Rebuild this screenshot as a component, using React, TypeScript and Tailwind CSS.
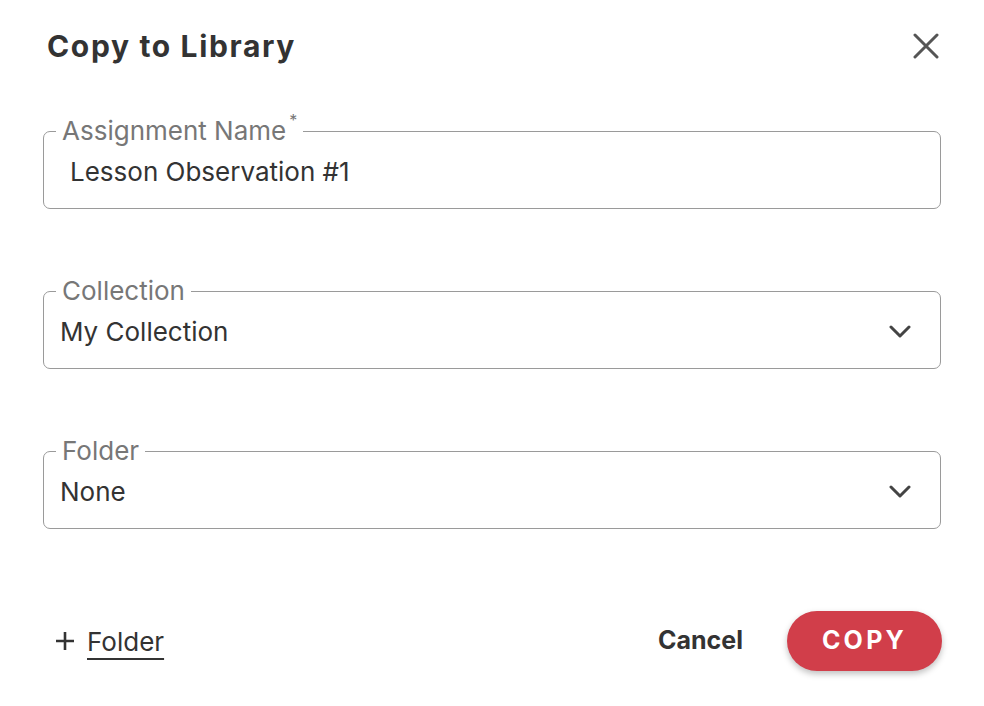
const Chevron = () => (
    <svg width="22" height="14" viewBox="0 0 22 14" className="text-[#444] mr-[13px]">
        <polyline points="2,2 11,11 20,2" fill="none" stroke="currentColor" strokeWidth="3" strokeLinecap="round" strokeLinejoin="round" />
    </svg>
);

const Field = ({ label, value, required, select, indent }: { label: string; value: string; required?: boolean; select?: boolean; indent?: boolean }) => (
    <fieldset className="border-[1.5px] border-[#9a9a9a] rounded-[7px] px-[16px] min-w-0">
        <legend className="-ml-[4px] px-[6px] text-[26px] leading-[26px] text-[#777]">
            {label}
            {required && <sup className="text-[16px] align-top relative top-[2px] ml-[3px]">*</sup>}
        </legend>
        <div className="flex items-center justify-between mt-[13px] mb-[21px] h-[30px]">
            <span className={`text-[26px] leading-[30px] text-[#333] ${indent ? 'pl-[10px]' : ''}`}>{value}</span>
            {select && <Chevron />}
        </div>
    </fieldset>
);

export default function App() {
    return (
        <div className="w-[984px] h-[706px] bg-white font-['Inter',sans-serif] px-[43px] pt-[28px]">
            <div className="flex items-center justify-between pl-[4px]">
                <h1 className="text-[30px] leading-[36px] font-bold tracking-[0.055em] text-[#333]">Copy to Library</h1>
                <button className="text-[#555] mr-[2px]">
                    <svg width="26" height="26" viewBox="0 0 26 26">
                        <path d="M2 2L24 24M24 2L2 24" stroke="currentColor" strokeWidth="3" strokeLinecap="round" />
                    </svg>
                </button>
            </div>

            <div className="mt-[54px] flex flex-col gap-[69px] w-[898px]">
                <Field label="Assignment Name" value="Lesson Observation #1" required indent />
                <Field label="Collection" value="My Collection" select />
                <Field label="Folder" value="None" select />
            </div>

            <div className="mt-[82px] flex items-center justify-between w-[899px]">
                <button className="flex items-center gap-[12px] pl-[12px] text-[26px] text-[#333]">
                    <svg width="20" height="20" viewBox="0 0 20 20">
                        <path d="M10 1V19M1 10H19" stroke="currentColor" strokeWidth="2.6" />
                    </svg>
                    <span className="underline underline-offset-[7px] decoration-[2px]">Folder</span>
                </button>
                <div className="flex items-center gap-[44px]">
                    <button className="text-[25px] font-bold text-[#333]">Cancel</button>
                    <button className="w-[155px] h-[60px] rounded-full bg-[#d13e4a] text-white text-[25px] font-bold tracking-[0.13em] shadow-[0_3px_6px_rgba(0,0,0,0.25)]">
                        COPY
                    </button>
                </div>
            </div>
        </div>
    );
}
